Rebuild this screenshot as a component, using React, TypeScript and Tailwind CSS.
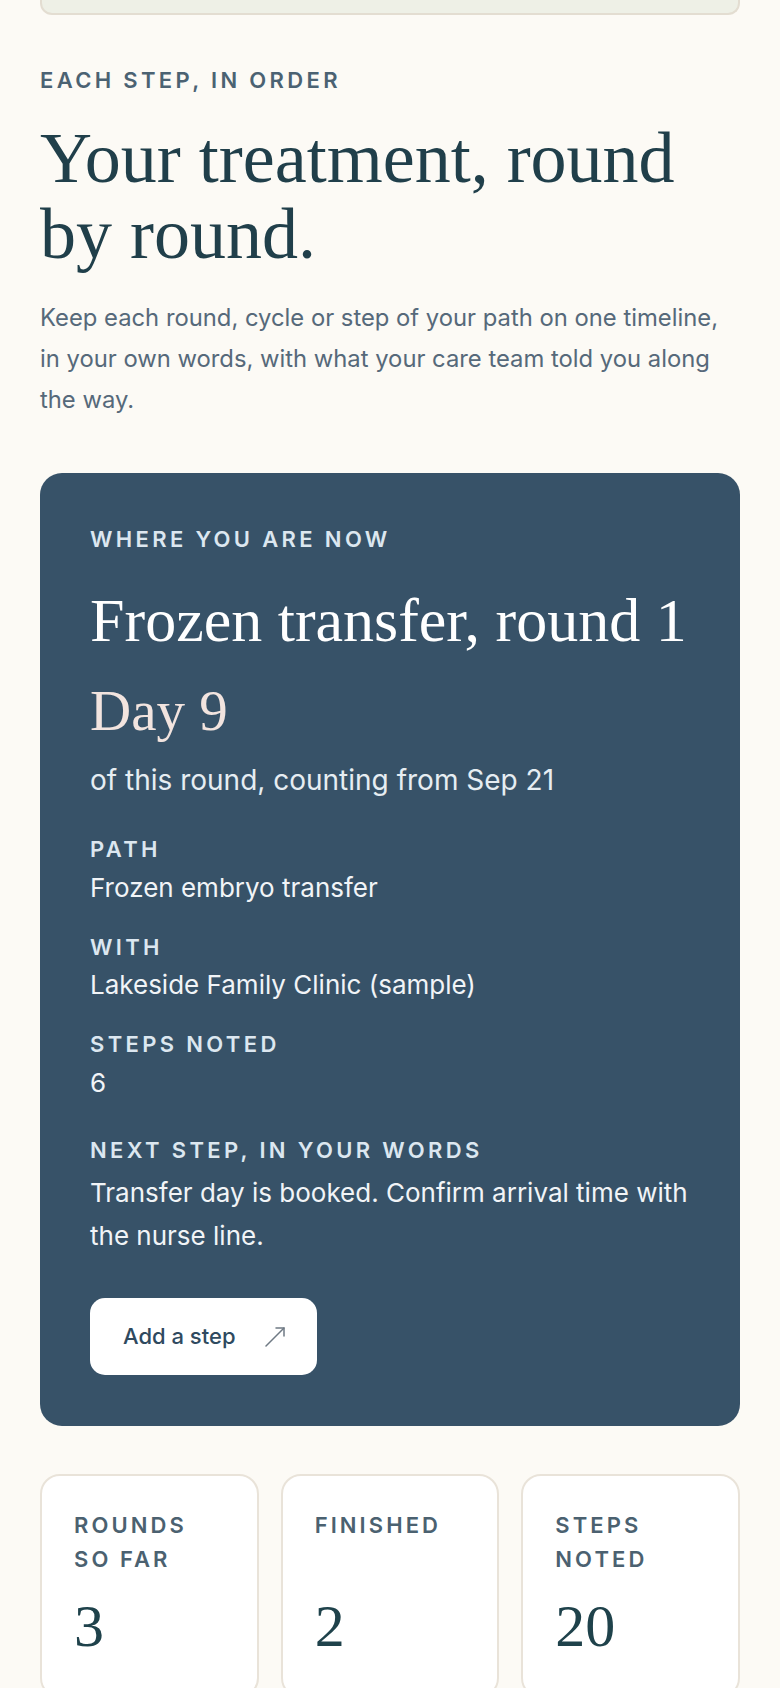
export default function App() {
  return (
    <div className="min-h-screen bg-[#fcfaf5] font-['Inter',sans-serif]">
      <div className="px-[40px] pb-[40px]">
        <div className="h-[15px] rounded-b-[12px] border-x-2 border-b-2 border-[#e3ddd1] bg-[#eef0e6]" />

        <p className="mt-[49px] text-[22px] font-semibold leading-[33px] tracking-[0.152em] text-[#4b6272]">
          EACH STEP, IN ORDER
        </p>
        <h1 className="mt-[23px] font-['Liberation_Serif',serif] text-[72px] leading-[76px] text-[#203f4a]">
          Your treatment, round
          <br />
          by round.
        </h1>
        <p className="mt-[25px] max-w-[686px] text-[23.8px] leading-[41px] text-[#56697a]">
          Keep each round, cycle or step of your path on one timeline, in your own words, with what
          your care team told you along the way.
        </p>

        <section className="mt-[53px] rounded-[22px] bg-[#375268] px-[50px] pb-[51px] pt-[50px]">
          <p className="text-[22px] font-semibold leading-[33px] tracking-[0.152em] text-[#dce7f0]">
            WHERE YOU ARE NOW
          </p>
          <h2 className="mt-[31px] whitespace-nowrap font-['Liberation_Serif',serif] text-[62px] leading-[67px] text-white">
            Frozen transfer, round 1
          </h2>
          <p className="mt-[26px] font-['Liberation_Serif',serif] text-[57px] leading-[62px] text-[#f2e4df]">
            Day 9
          </p>
          <p className="mt-[18px] text-[28px] leading-[40px] text-[#e6edf2]">
            of this round, counting from Sep 21
          </p>

          <div className="mt-[33px]">
            <p className="text-[22px] font-semibold leading-[33px] tracking-[0.152em] text-[#dce7f0]">PATH</p>
            <p className="mt-[3px] text-[26px] leading-[38px] text-[#f1f4f7]">Frozen embryo transfer</p>
          </div>
          <div className="mt-[24px]">
            <p className="text-[22px] font-semibold leading-[33px] tracking-[0.152em] text-[#dce7f0]">WITH</p>
            <p className="mt-[2px] text-[26px] leading-[38px] text-[#f1f4f7]">
              Lakeside Family Clinic (sample)
            </p>
          </div>
          <div className="mt-[24px]">
            <p className="text-[22px] font-semibold leading-[33px] tracking-[0.152em] text-[#dce7f0]">
              STEPS NOTED
            </p>
            <p className="mt-[3px] text-[26px] leading-[38px] text-[#f1f4f7]">6</p>
          </div>
          <div className="mt-[32px]">
            <p className="text-[22px] font-semibold leading-[33px] tracking-[0.152em] text-[#dce7f0]">
              NEXT STEP, IN YOUR WORDS
            </p>
            <p className="mt-[4px] text-[26px] leading-[43px] text-[#f1f4f7]">
              Transfer day is booked. Confirm arrival time with the nurse line.
            </p>
          </div>

          <button className="mt-[41px] flex h-[77px] items-center gap-[29px] rounded-[15px] bg-white pl-[33px] pr-[32px]">
            <span className="text-[22px] font-medium text-[#2f4a5f]">Add a step</span>
            <svg width="20" height="20" viewBox="0 0 20 20" fill="none" stroke="#6f7a84" strokeWidth="1.5" strokeLinecap="round" strokeLinejoin="round">
              <path d="M1 19 L19 1" />
              <path d="M11 1 H19 V9" />
            </svg>
          </button>
        </section>

        <div className="mt-[48px] grid grid-cols-3 gap-[22px]">
          {[
            { label: "ROUNDS SO FAR", value: "3" },
            { label: "FINISHED", value: "2" },
            { label: "STEPS NOTED", value: "20" },
          ].map((s) => (
            <div key={s.label} className="rounded-[20px] border-2 border-[#e9e3d9] bg-white px-[32px] pb-[40px] pt-[32px]">
              <p className="min-h-[68px] text-[22px] font-semibold leading-[34px] tracking-[0.14em] text-[#4b6170]">
                {s.label}
              </p>
              <p className="mt-[20px] font-['Liberation_Serif',serif] text-[60px] leading-[60px] text-[#1f424b]">
                {s.value}
              </p>
            </div>
          ))}
        </div>
      </div>
    </div>
  );
}
